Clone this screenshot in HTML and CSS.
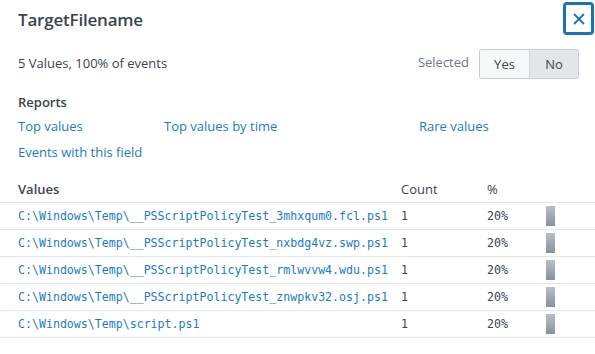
FILE: index.html
```html
<!DOCTYPE html>
<html>
<head>
<meta charset="utf-8">
<link rel="stylesheet" href="styles.css">
</head>
<body>
<div class="popup">
  <div class="header">
    <h1 class="title">TargetFilename</h1>
    <button class="close" aria-label="Close">
      <svg width="12" height="12" viewBox="0 0 12 12"><path d="M1.5 1.5 L10.5 10.5 M10.5 1.5 L1.5 10.5" stroke="#1a73b5" stroke-width="1.8" fill="none" stroke-linecap="round"/></svg>
    </button>
  </div>
  <div class="stats">
    <span class="summary">5 Values, 100% of events</span>
    <div class="selected">
      <span class="selected-label">Selected</span>
      <div class="toggle">
        <span class="seg">Yes</span>
        <span class="seg active">No</span>
      </div>
    </div>
  </div>
  <div class="reports">
    <div class="reports-title">Reports</div>
    <div class="links">
      <a class="link">Top values</a>
      <a class="link">Top values by time</a>
      <a class="link">Rare values</a>
      <a class="link">Events with this field</a>
    </div>
  </div>
  <div class="table">
    <div class="row head">
      <span class="c-val">Values</span>
      <span class="c-count">Count</span>
      <span class="c-pct">%</span>
      <span class="c-bar"></span>
    </div>
    <div class="row">
      <span class="c-val mono link">C:\Windows\Temp\__PSScriptPolicyTest_3mhxqum0.fcl.ps1</span>
      <span class="c-count mono">1</span>
      <span class="c-pct mono">20%</span>
      <span class="c-bar"><span class="bar"></span></span>
    </div>
    <div class="row">
      <span class="c-val mono link">C:\Windows\Temp\__PSScriptPolicyTest_nxbdg4vz.swp.ps1</span>
      <span class="c-count mono">1</span>
      <span class="c-pct mono">20%</span>
      <span class="c-bar"><span class="bar"></span></span>
    </div>
    <div class="row">
      <span class="c-val mono link">C:\Windows\Temp\__PSScriptPolicyTest_rmlwvvw4.wdu.ps1</span>
      <span class="c-count mono">1</span>
      <span class="c-pct mono">20%</span>
      <span class="c-bar"><span class="bar"></span></span>
    </div>
    <div class="row">
      <span class="c-val mono link">C:\Windows\Temp\__PSScriptPolicyTest_znwpkv32.osj.ps1</span>
      <span class="c-count mono">1</span>
      <span class="c-pct mono">20%</span>
      <span class="c-bar"><span class="bar"></span></span>
    </div>
    <div class="row">
      <span class="c-val mono link">C:\Windows\Temp\script.ps1</span>
      <span class="c-count mono">1</span>
      <span class="c-pct mono">20%</span>
      <span class="c-bar"><span class="bar"></span></span>
    </div>
  </div>
</div>
</body>
</html>
```
FILE: styles.css
```css
* { box-sizing: border-box; }
html, body { margin: 0; padding: 0; background: #fff; }
body {
  font-family: "Open Sans", Lato, sans-serif;
  color: #3c444d;
  font-size: 13px;
  width: 595px;
  height: 354px;
  overflow: hidden;
}
.popup { padding: 2px 16px 0 18px; }
.header {
  display: flex;
  justify-content: space-between;
  align-items: center;
  height: 33px;
}
.title {
  margin: 0;
  font-size: 17px;
  font-weight: 600;
  color: #3c444d;
  line-height: 22px;
  margin-top: 2px;
  letter-spacing: -0.2px;
}
.close {
  width: 31px;
  height: 33px;
  margin-right: -15px;
  border: 3px solid #1a73b5;
  border-radius: 4px;
  background: #fff;
  display: flex;
  align-items: center;
  justify-content: center;
  padding: 0;
}
.stats {
  display: flex;
  justify-content: space-between;
  align-items: center;
  margin-top: 14px;
}
.summary { margin-top: -2px; }
.selected { display: flex; align-items: center; gap: 10px; }
.selected-label { color: #6b7785; margin-top: -5px; }
.toggle {
  display: flex;
  border: 1px solid #c3cbd4;
  border-radius: 3px;
  overflow: hidden;
  height: 30px;
}
.seg {
  width: 49px;
  display: flex;
  align-items: center;
  justify-content: center;
  background: #f7f8fa;
  color: #3c444d;
}
.seg.active { background: #e1e6eb; border-left: 1px solid #d0d6dd; }
.reports { margin-top: 14px; }
.reports-title { font-weight: 600; line-height: 18px; }
.links {
  display: grid;
  grid-template-columns: 146px 255px auto;
  row-gap: 8px;
  margin-top: 6px;
  line-height: 18px;
}
.link { color: #1b7bc2; }
.table { margin: 13px -16px 0 -18px; }
.row {
  display: flex;
  align-items: center;
  height: 27px;
  padding-left: 18px;
  border-bottom: 1px solid #e1e6eb;
}
.row.head { height: 29px; padding-top: 2px; }
.head .c-val { font-weight: 600; }
.c-val { width: 383px; white-space: nowrap; }
.c-count { width: 86px; }
.c-pct { width: 59px; }
.c-bar { width: 40px; display: flex; align-items: center; }
.mono {
  font-family: "DejaVu Sans Mono", monospace;
  font-size: 11.6px;
}
.c-count.mono, .c-pct.mono { color: #3c444d; }
.bar {
  display: block;
  width: 9px;
  height: 20px;
  background: linear-gradient(#b8bfc8, #87909b);
}
```
